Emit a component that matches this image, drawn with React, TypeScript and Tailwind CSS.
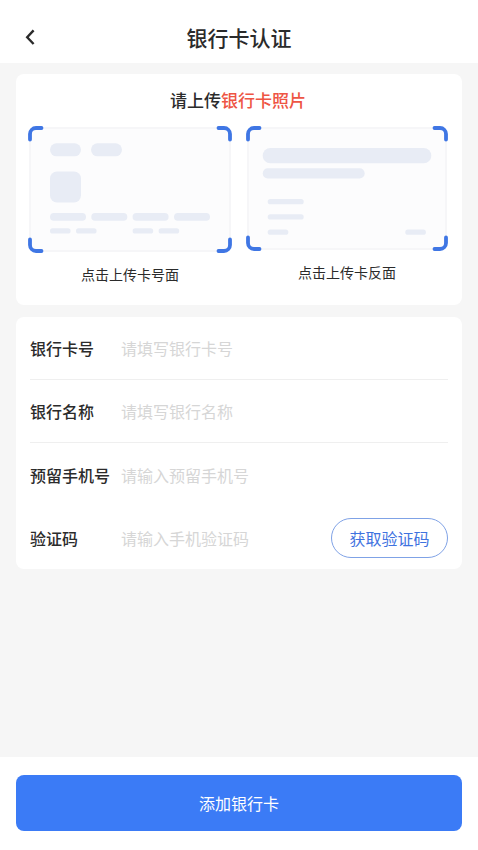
import { useState } from "react";

const BLOCK = "#e8ecf5";

interface Field {
  id: string;
  label: string;
  placeholder: string;
  type: string;
  divider?: boolean;
}

const FIELDS: Field[] = [
  { id: "cardNumber", label: "银行卡号", placeholder: "请填写银行卡号", type: "text", divider: true },
  { id: "bankName", label: "银行名称", placeholder: "请填写银行名称", type: "text", divider: true },
  { id: "phone", label: "预留手机号", placeholder: "请输入预留手机号", type: "tel" },
  { id: "code", label: "验证码", placeholder: "请输入手机验证码", type: "text" },
];

/**
 * Card outline with the four blue scan corners.
 */
function ScanFrame({ width, height }: { width: number; height: number }) {
  const r = width - 2;
  const b = height - 2;

  return (
    <>
      <rect x="2" y="2" width={width - 4} height={height - 4} rx="5" fill="#fcfcfd" stroke="#f3f4f6" strokeWidth="1.5" />
      <g fill="none" stroke="#3f76e4" strokeWidth="3.8" strokeLinecap="round">
        <path d="M2 13.5V8a6 6 0 0 1 6-6h5.5" />
        <path d={`M${r} 13.5V8a6 6 0 0 0-6-6h-5.5`} />
        <path d={`M2 ${b - 11.5}v5.5a6 6 0 0 0 6 6h5.5`} />
        <path d={`M${r} ${b - 11.5}v5.5a6 6 0 0 1-6 6h-5.5`} />
      </g>
    </>
  );
}

function CardFront() {
  return (
    <svg viewBox="0 0 204 127" className="block w-full h-auto" aria-hidden="true">
      <ScanFrame width={204} height={127} />
      <g fill={BLOCK}>
        <rect x="22" y="17.3" width="31" height="13" rx="6.5" />
        <rect x="63" y="17.3" width="31" height="13" rx="6.5" />
        <rect x="22" y="45.5" width="31" height="31" rx="7" />
        {[22, 63.3, 104.6, 146].map((x) => (
          <rect key={x} x={x} y="87" width="36" height="7.7" rx="3.8" />
        ))}
        {[22, 48, 104.6, 130.6].map((x) => (
          <rect key={x} x={x} y="102.3" width="20.6" height="5.3" rx="2.6" />
        ))}
      </g>
    </svg>
  );
}

function CardBack() {
  return (
    <svg viewBox="0 0 202 125" className="block w-full h-auto" aria-hidden="true">
      <ScanFrame width={202} height={125} />
      <g fill={BLOCK}>
        <rect x="16.7" y="22" width="168.6" height="15.3" rx="7.6" />
        <rect x="16.7" y="42.3" width="102" height="10.2" rx="5.1" />
        <rect x="21.7" y="73" width="36" height="5.3" rx="2.6" />
        <rect x="21.7" y="88.3" width="36" height="5.3" rx="2.6" />
        <rect x="21.7" y="103.5" width="20.6" height="5.3" rx="2.6" />
        <rect x="159.3" y="103.5" width="20.6" height="5.3" rx="2.6" />
      </g>
    </svg>
  );
}

export default function App() {
  const [values, setValues] = useState<Record<string, string>>({});

  return (
    <div className="min-h-screen flex flex-col bg-[#f6f6f6] text-[#2b2b2b] font-['Noto_Sans_CJK_SC',sans-serif]">
      {/* Header */}
      <header className="grid grid-cols-[40px_1fr_40px] items-center h-[63px] pt-[10px] px-4 bg-white">
        <button type="button" aria-label="返回" className="flex items-center h-10 pl-2">
          <svg viewBox="0 0 12 18" className="w-3 h-[18px]" fill="none" stroke="#2b2b2b" strokeWidth="2.4">
            <path d="M9.6 2.4L3.2 9.2l6.4 6.8" />
          </svg>
        </button>
        <h1 className="text-center text-[21px] leading-8 font-medium">银行卡认证</h1>
      </header>

      <main className="flex-1 flex flex-col gap-3 px-4 pt-[11px]">
        {/* Card photos */}
        <section className="rounded-lg bg-white pt-[14px] pb-[19px] pl-3 pr-[14px]">
          <h2 className="text-center text-[17px] leading-6 font-medium">
            请上传<span className="text-[#ee5544]">银行卡照片</span>
          </h2>
          <div className="grid grid-cols-[204fr_202fr] items-start gap-[14px] mt-[14px]">
            <button type="button" className="flex flex-col gap-[9px] text-sm">
              <CardFront />
              <span className="w-full text-center leading-6">点击上传卡号面</span>
            </button>
            <button type="button" className="flex flex-col gap-[9px] text-sm">
              <CardBack />
              <span className="w-full text-center leading-6">点击上传卡反面</span>
            </button>
          </div>
        </section>

        {/* Card details */}
        <form id="bankCard" className="rounded-lg bg-white px-[14px]" onSubmit={(e) => e.preventDefault()}>
          {FIELDS.map((field) => (
            <div
              key={field.id}
              className={`flex items-center h-[63px] ${field.divider ? "border-b border-[#efefef]" : ""}`}
            >
              <label htmlFor={field.id} className="w-[91px] shrink-0 text-base font-medium">
                {field.label}
              </label>
              <input
                id={field.id}
                type={field.type}
                placeholder={field.placeholder}
                value={values[field.id] ?? ""}
                onChange={(e) => setValues((prev) => ({ ...prev, [field.id]: e.target.value }))}
                className="flex-1 min-w-0 h-10 text-base outline-none placeholder:text-[#d6d6d6]"
              />
              {field.id === "code" && (
                <button
                  type="button"
                  className="shrink-0 h-10 w-[117px] rounded-full border border-[#7fa2e6] text-base text-[#3f73df]"
                >
                  获取验证码
                </button>
              )}
            </div>
          ))}
        </form>
      </main>

      {/* Submit */}
      <footer className="bg-white px-4 pt-[18px] pb-[19px]">
        <button type="submit" form="bankCard" className="w-full h-14 rounded-lg bg-[#3b7bf6] text-base text-white">
          添加银行卡
        </button>
      </footer>
    </div>
  );
}
